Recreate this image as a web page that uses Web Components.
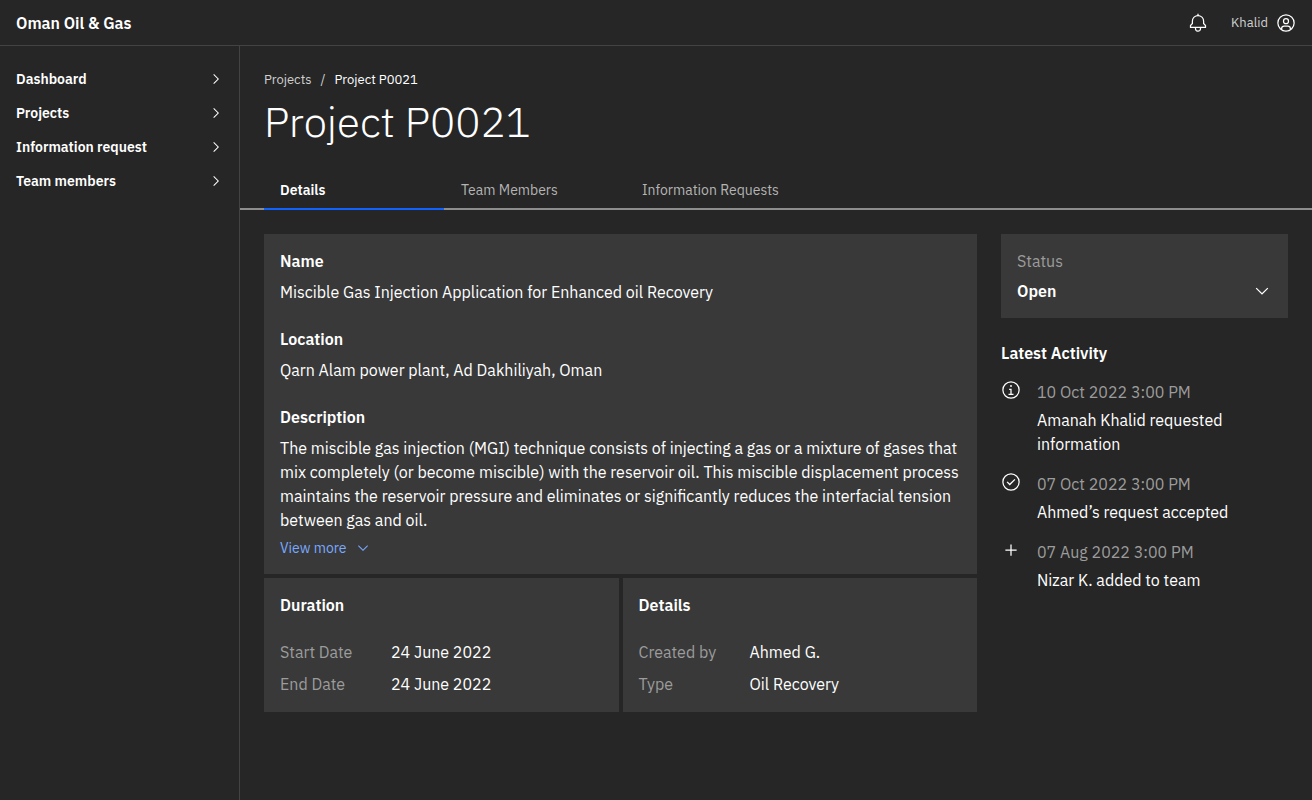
<!DOCTYPE html>
<html lang="en">
<head>
<meta charset="utf-8">
<meta name="viewport" content="width=device-width, initial-scale=1">
<title>Project P0021 – Oman Oil &amp; Gas</title>
<style>
  :root {
    --bg: #262626;
    --panel: #393939;
    --line: #434343;
    --rule: #8d8d8d;
    --text: #ffffff;
    --soft: #d0d0d0;
    --muted: #9c9c9c;
    --link: #78a9ff;
    --accent: #0f62fe;
  }
  body {
    margin: 0;
    background: var(--bg);
    color: var(--text);
    font: 400 16px/24px "IBM Plex Sans", Roboto, "Liberation Sans", sans-serif;
  }
</style>
</head>
<body>
<app-shell>
  <app-header slot="header" brand="Oman Oil &amp; Gas" user="Khalid"></app-header>
  <side-nav slot="nav">
    <nav-item href="#dashboard">Dashboard</nav-item>
    <nav-item href="#projects">Projects</nav-item>
    <nav-item href="#requests">Information request</nav-item>
    <nav-item href="#team">Team members</nav-item>
  </side-nav>
  <page-heading parent="Projects" title-text="Project P0021"></page-heading>
  <tab-bar>
    <tab-item selected>Details</tab-item>
    <tab-item>Team Members</tab-item>
    <tab-item>Information Requests</tab-item>
  </tab-bar>
  <project-layout>
    <info-panel class="wide">
      <text-field heading="Name">Miscible Gas Injection Application for Enhanced oil Recovery</text-field>
      <text-field heading="Location">Qarn Alam power plant, Ad Dakhiliyah, Oman</text-field>
      <text-field heading="Description">The miscible gas injection (MGI) technique consists of injecting a gas or a mixture of gases that mix completely (or become miscible) with the reservoir oil. This miscible displacement process maintains the reservoir pressure and eliminates or significantly reduces the interfacial tension between gas and oil.<more-button slot="action">View more</more-button></text-field>
    </info-panel>
    <info-panel heading="Duration">
      <fact-row label="Start Date">24 June 2022</fact-row>
      <fact-row label="End Date">24 June 2022</fact-row>
    </info-panel>
    <info-panel heading="Details">
      <fact-row label="Created by">Ahmed G.</fact-row>
      <fact-row label="Type">Oil Recovery</fact-row>
    </info-panel>
    <status-select slot="aside"></status-select>
    <activity-feed slot="aside">
      <activity-item icon="info" time="10 Oct 2022 3:00 PM">Amanah Khalid requested information</activity-item>
      <activity-item icon="check" time="07 Oct 2022 3:00 PM">Ahmed’s request accepted</activity-item>
      <activity-item icon="add" time="07 Aug 2022 3:00 PM">Nizar K. added to team</activity-item>
    </activity-feed>
  </project-layout>
</app-shell>

<script>
const RING = '<path d="M16,30A14,14,0,1,1,30,16,14,14,0,0,1,16,30ZM16,4A12,12,0,1,0,28,16,12,12,0,0,0,16,4Z"/>';
const ICONS = {
  bell: '<path d="M28.7071,19.293,26,16.5859V13a10.0136,10.0136,0,0,0-9-9.9492V1H15V3.0508A10.0136,10.0136,0,0,0,6,13v3.5859L3.2929,19.293A1,1,0,0,0,3,20v3a1,1,0,0,0,1,1h7v.7768a5.152,5.152,0,0,0,4.5,5.1987A5.0057,5.0057,0,0,0,21,25V24h7a1,1,0,0,0,1-1V20A1,1,0,0,0,28.7071,19.293ZM19,25a3,3,0,0,1-6,0V24h6Zm8-3H5V20.4141L7.707,17.707A1,1,0,0,0,8,17V13a8,8,0,0,1,16,0v4a1,1,0,0,0,.293.707L27,20.4141Z"/>',
  user: '<path d="M16,8a5,5,0,1,0,5,5A5,5,0,0,0,16,8Zm0,8a3,3,0,1,1,3-3A3.0034,3.0034,0,0,1,16,16Z"/><path d="M16,2A14,14,0,1,0,30,16,14.0158,14.0158,0,0,0,16,2ZM10,26.3765V25a3.0033,3.0033,0,0,1,3-3h6a3.0033,3.0033,0,0,1,3,3v1.3765a11.8989,11.8989,0,0,1-12,0Zm13.9925-1.4507A5.0016,5.0016,0,0,0,19,20H13a5.0016,5.0016,0,0,0-4.9925,4.9258,12,12,0,1,1,15.985,0Z"/>',
  info: RING + '<path d="M17 22V14H13V16H15V22H12V24H20V22ZM16 8a1.5 1.5 0 1 0 1.5 1.5A1.5 1.5 0 0 0 16 8z"/>',
  check: RING + '<path d="M14 21.414 9 16.413 10.413 15 14 18.586 21.585 11 23 12.415z"/>',
  add: '<path d="M17 15V7H15V15H7V17H15V25H17V17H25V15z"/>',
  right: '<path d="M22 16 12 26 10.6 24.6 19.2 16 10.6 7.4 12 6z"/>',
  down: '<path d="M16 22 6 12 7.4 10.6 16 19.2 24.6 10.6 26 12z"/>'
};
const icon = (name, size) =>
  `<svg width="${size}" height="${size}" viewBox="0 0 32 32" fill="currentColor" aria-hidden="true">${ICONS[name]}</svg>`;

const BASE = `
  *, :host { box-sizing: border-box; }
  :host { display: block; }
  svg { display: block; flex: none; }
  h1, h2, p, dl, dt, dd, ul, li { margin: 0; padding: 0; }
  h2 { font-size: 16px; line-height: 24px; font-weight: 600; }
  a { color: inherit; text-decoration: none; }
  button { margin: 0; padding: 0; border: 0; background: none; color: inherit; font: inherit; cursor: pointer; }
`;

function define(name, css, render) {
  customElements.define(name, class extends HTMLElement {
    constructor() {
      super();
      this.attachShadow({ mode: "open" });
    }
    connectedCallback() {
      const attr = key => (this.getAttribute(key) || "").replace(/&/g, "&amp;").replace(/</g, "&lt;");
      this.shadowRoot.innerHTML = `<style>${BASE}${css}</style>${render(attr, this)}`;
    }
  });
}

define("app-shell", `
  :host { display: grid; grid-template: auto 1fr / 240px minmax(0, 1fr); min-height: 100vh; }
  .top { grid-column: 1 / -1; }
  aside { border-right: 1px solid var(--line); }
`, () => `
  <div class="top"><slot name="header"></slot></div>
  <aside><slot name="nav"></slot></aside>
  <main><slot></slot></main>`);

define("app-header", `
  header { display: flex; align-items: center; justify-content: space-between; height: 46px; padding: 0 16px; border-bottom: 1px solid var(--line); }
  .brand { font-weight: 600; }
  .tools, .user { display: flex; align-items: center; }
  .tools { gap: 23px; }
  .user { gap: 8px; font-size: 13px; }
  .user span { color: var(--soft); }
`, attr => `
  <header>
    <a class="brand" href="#home">${attr("brand")}</a>
    <div class="tools">
      <button type="button" aria-label="Notifications">${icon("bell", 20)}</button>
      <button type="button" class="user"><span>${attr("user")}</span>${icon("user", 20)}</button>
    </div>
  </header>`);

define("side-nav", `
  nav { display: flex; flex-direction: column; padding: 16px 0; }
`, () => `<nav aria-label="Main"><slot></slot></nav>`);

define("nav-item", `
  a { display: flex; align-items: center; justify-content: space-between; height: 34px; padding: 0 15px 0 16px; font-size: 14px; font-weight: 600; }
`, attr => `<a href="${attr("href")}"><slot></slot>${icon("right", 16)}</a>`);

define("page-heading", `
  :host { padding: 24px 24px 0; }
  nav { display: flex; gap: 9px; font-size: 13px; line-height: 20px; color: var(--soft); }
  nav [aria-current] { color: var(--text); }
  h1 { margin-top: 7px; font-size: 42px; line-height: 50px; font-weight: 300; }
`, attr => `
  <nav aria-label="Breadcrumb">
    <a href="#projects">${attr("parent")}</a><span>/</span><a href="#project" aria-current="page">${attr("title-text")}</a>
  </nav>
  <h1>${attr("title-text")}</h1>`);

define("tab-bar", `
  :host { margin-top: 23px; padding: 0 24px; box-shadow: inset 0 -2px var(--rule); }
  div { display: flex; gap: 1px; }
`, () => `<div role="tablist"><slot></slot></div>`);

define("tab-item", `
  button { width: 180px; height: 40px; padding: 2px 16px 0; border-bottom: 2px solid transparent; color: #b4b4b4; font-size: 14px; text-align: left; }
  :host([selected]) button { border-color: var(--accent); color: var(--text); font-weight: 600; }
`, (attr, el) => `<button type="button" role="tab" aria-selected="${el.hasAttribute("selected")}"><slot></slot></button>`);

define("project-layout", `
  :host { display: grid; grid-template-columns: minmax(0, 713fr) minmax(0, 287fr); align-items: start; gap: 24px; padding: 24px; }
  .panels { display: grid; grid-template-columns: repeat(2, minmax(0, 1fr)); gap: 4px; }
  ::slotted(.wide) { grid-column: 1 / -1; }
`, () => `
  <div class="panels"><slot></slot></div>
  <div><slot name="aside"></slot></div>`);

define("info-panel", `
  :host { padding: 15px 16px 16px; background: var(--panel); }
  h2 { margin-bottom: 23px; }
  .body { display: grid; gap: 8px; }
  :host(.wide) .body { gap: 23px; }
`, attr => `
  ${attr("heading") ? `<h2>${attr("heading")}</h2>` : ""}
  <div class="body"><slot></slot></div>`);

define("text-field", `
  p { margin-top: 7px; }
`, attr => `
  <h2>${attr("heading")}</h2>
  <p><slot></slot></p>
  <slot name="action"></slot>`);

define("more-button", `
  :host { margin-top: 6px; }
  button { display: flex; align-items: center; gap: 8px; color: var(--link); font-size: 14px; line-height: 20px; }
`, () => `<button type="button"><slot></slot>${icon("down", 16)}</button>`);

define("fact-row", `
  dl { display: grid; grid-template-columns: 111px minmax(0, 1fr); }
  dt { color: var(--muted); }
`, attr => `<dl><dt>${attr("label")}</dt><dd><slot></slot></dd></dl>`);

define("status-select", `
  :host { padding: 15px 16px; background: var(--panel); }
  label { display: block; color: var(--muted); }
  .control { display: grid; align-items: center; margin-top: 6px; }
  select, svg { grid-area: 1 / 1; }
  select { appearance: none; width: 100%; height: 24px; margin: 0; padding: 0; border: 0; background: transparent; color: var(--text); font: inherit; font-weight: 600; }
  option { background: var(--panel); }
  svg { justify-self: end; pointer-events: none; }
`, () => `
  <label for="status">Status</label>
  <div class="control">
    <select id="status"><option>Open</option></select>
    ${icon("down", 20)}
  </div>`);

define("activity-feed", `
  :host { padding-top: 23px; }
  div { display: grid; gap: 16px; margin-top: 15px; }
`, () => `<h2>Latest Activity</h2><div role="list"><slot></slot></div>`);

define("activity-item", `
  :host { display: grid; grid-template-columns: 20px minmax(0, 1fr); gap: 16px; }
  time { display: block; margin-bottom: 4px; color: var(--muted); }
`, attr => `
  ${icon(attr("icon"), 20)}
  <div><time>${attr("time")}</time><slot></slot></div>`);

document.querySelectorAll("activity-item").forEach(el => el.setAttribute("role", "listitem"));
</script>
</body>
</html>
